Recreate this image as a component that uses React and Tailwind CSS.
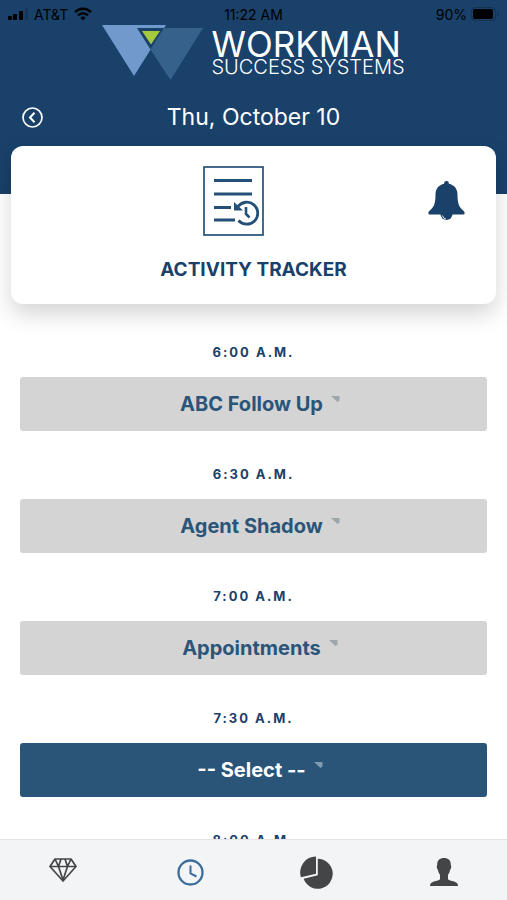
import { useState } from "react";

const ACTIVITIES = [
  "-- Select --",
  "ABC Follow Up",
  "Agent Shadow",
  "Appointments",
];

const SLOTS = [
  { time: "6:00 A.M.", activity: "ABC Follow Up" },
  { time: "6:30 A.M.", activity: "Agent Shadow" },
  { time: "7:00 A.M.", activity: "Appointments" },
  { time: "7:30 A.M.", activity: "-- Select --" },
  { time: "8:00 A.M.", activity: "-- Select --" },
];

function StatusBar() {
  return (
    <div className="relative flex h-6 items-center justify-between px-2 pt-1 text-[14px] text-black">
      <div className="flex items-center gap-1.5">
        <svg width="20" height="12" viewBox="0 0 20 12">
          <rect x="0" y="8" width="4" height="4" rx="1" />
          <rect x="5" y="6" width="4" height="6" rx="1" />
          <rect x="11" y="3" width="4" height="9" rx="1" />
          <rect x="17" y="0" width="3" height="12" rx="1" opacity="0.15" />
        </svg>
        <span>AT&T</span>
        <svg width="18" height="14" viewBox="0 0 18 14" fill="none" stroke="black" strokeWidth="2.4">
          <path d="M1 5.2C5.4.6 12.6.6 17 5.2" />
          <path d="M4 8.4c2.8-2.9 7.2-2.9 10 0" />
          <path d="M6.3 10.7c1.5-1.5 3.9-1.5 5.4 0L9 13.5z" fill="black" stroke="none" />
        </svg>
      </div>
      <span className="absolute inset-x-0 text-center">11:22 AM</span>
      <div className="flex items-center gap-1">
        <span>90%</span>
        <svg width="28" height="14" viewBox="0 0 28 14">
          <rect x="0.5" y="0.5" width="24" height="13" rx="3.5" fill="none" stroke="black" opacity="0.2" />
          <rect x="2" y="2" width="20" height="10" rx="2" />
          <path d="M26 4.500c2 .8 2 4.200 0 5z" opacity="0.2" />
        </svg>
      </div>
    </div>
  );
}

function Logo() {
  return (
    <div className="flex h-14 items-start justify-center gap-2 pt-px">
      <svg width="101" height="55" viewBox="0 0 101 55">
        <path d="M0 0h64L32 51z" fill="#7199cb" />
        <path d="M48.500 24.500 62 3h39L68.500 55z" fill="#36618a" />
        <path d="M35 3h27L48.500 24.500z" fill="#19416a" />
        <path d="M40 6h18L49 19.500z" fill="#a6c83c" />
      </svg>
      <div className="pt-1 whitespace-nowrap text-white">
        <p className="text-[35px] leading-[30px]">WORKMAN</p>
        <p className="text-[20px] leading-4 font-light">SUCCESS SYSTEMS</p>
      </div>
    </div>
  );
}

function Header() {
  return (
    <header className="bg-[#19416a] pb-14">
      <StatusBar />
      <Logo />
      <div className="relative mt-4 flex h-[42px] items-center justify-center text-white">
        <button type="button" aria-label="Previous day" className="absolute left-[22px]">
          <svg width="21" height="21" viewBox="0 0 21 21" fill="none" stroke="white" strokeWidth="1.7">
            <circle cx="10.5" cy="10.5" r="9.5" />
            <path d="M12.5 5.8 8 10.5l4.500 4.700" strokeWidth="2" />
          </svg>
        </button>
        <h1 className="text-[23px]">Thu, October 10</h1>
      </div>
    </header>
  );
}

function TrackerCard() {
  return (
    <section className="relative mx-[11px] -mt-12 flex flex-col items-center rounded-xl bg-white pt-5 pb-5 shadow-[0_10px_22px_rgba(0,0,0,0.17)]">
      <svg className="mr-10" width="61" height="70" viewBox="0 0 61 70" fill="none" stroke="#245078">
        <rect x="1" y="1" width="59" height="68" strokeWidth="1.7" />
        <path d="M11 14.500h38M11 28h38M11 41.500h17M11 54h21" strokeWidth="3.2" />
        <path d="M35 40.500A11 11 0 1 1 35.500 54.500" strokeWidth="2.8" />
        <path d="M31 36v8.500h9z" fill="#245078" stroke="none" />
        <path d="M43 41v7l3.500 3.500" strokeWidth="2.6" />
      </svg>
      <h2 className="mt-5 text-[19px] leading-7 font-bold text-[#19416a]">ACTIVITY TRACKER</h2>
      <button type="button" aria-label="Notifications" className="absolute top-[35px] right-[31px]">
        <svg width="37" height="41" viewBox="0 0 37 41" fill="#19416a">
          <path d="M18.500 0a2.300 2.300 0 0 1 2.300 2.800C26.500 4 29.500 8 29.500 13.500c0 9 1.500 12.500 6.200 16.500 1.600 1.400 1.100 3.500-.7 3.500H2c-1.800 0-2.300-2.100-.7-3.500C6 26 7.500 22.500 7.500 13.500 7.500 8 10.500 4 16.200 2.800A2.300 2.300 0 0 1 18.500 0z" />
          <path d="M12.500 33h12a6 6 0 0 1-12 0z" />
          <path d="M14.500 34.500a4 4 0 0 0 3.500 3.500" fill="none" stroke="white" strokeWidth="0.9" />
        </svg>
      </button>
    </section>
  );
}

function Slot({ slot, index, onChange }) {
  const id = `slot-${index}`;
  const empty = slot.activity === ACTIVITIES[0];

  return (
    <li>
      <label
        htmlFor={id}
        className="block text-center text-[13px] leading-5 font-bold tracking-[2px] text-[#19416a]"
      >
        {slot.time}
      </label>
      <div
        className={`mt-[15px] flex h-[54px] items-center justify-center rounded-[3px] ${
          empty ? "bg-[#2a5579] text-white" : "bg-[#d4d4d4] text-[#2a5579]"
        }`}
      >
        <div className="relative">
          <select
            id={id}
            value={slot.activity}
            onChange={(e) => onChange(index, e.target.value)}
            className="block appearance-none pr-1 text-[20px] leading-7 font-bold field-sizing-content"
          >
            {ACTIVITIES.map((a) => (
              <option key={a}>{a}</option>
            ))}
          </select>
          <svg
            width="9"
            height="7"
            viewBox="0 0 9 7"
            className={`pointer-events-none absolute top-1.5 left-full ml-1 ${
              empty ? "text-[#7f9bb3]" : "text-[#9fa6a9]"
            }`}
          >
            <path d="M0 0h8.500v4.500L6.500 6z" fill="currentColor" />
          </svg>
        </div>
      </div>
    </li>
  );
}

function TabBar() {
  return (
    <nav className="grid h-[61px] shrink-0 grid-cols-4 place-items-center border-t border-[#e2e4e6] bg-[#f3f4f6] pt-1">
      <a href="#goals" aria-label="Goals" className="pb-1">
        <svg width="28" height="24" viewBox="0 0 28 24" fill="none" stroke="#444547" strokeWidth="1.7" strokeLinejoin="round">
          <path d="M6 1h16l5 7.500L14 23 1 8.500z" />
          <path d="M1 8.500h26M9.500 8.500 14 22l4.500-13.500M6 1l3.500 7.500L12 1M22 1l-3.500 7.500L16 1" />
        </svg>
      </a>
      <a href="#tracker" aria-label="Tracker">
        <svg width="27" height="27" viewBox="0 0 27 27" fill="none" stroke="#3b6c9b">
          <circle cx="13.5" cy="13.5" r="12" strokeWidth="2.3" />
          <path d="M13.500 6.500v8l6 3" strokeWidth="2" />
        </svg>
      </a>
      <a href="#reports" aria-label="Reports">
        <svg width="33" height="33" viewBox="0 0 33 33" fill="#444547">
          <path d="M16 .5v17.300L.9 21.300A15.500 16 0 0 1 16 .5z" />
          <path d="M17.800 2.800a15 15 0 1 1-14.200 20l14.200-3.600z" />
        </svg>
      </a>
      <a href="#profile" aria-label="Profile">
        <svg width="28" height="28" viewBox="0 0 28 28" fill="#444547">
          <path d="M14 0c4.300 0 6.800 2.300 6.800 6.500 0 1 .7 1.500.3 3.200-.2 1.300-.9 1.700-1.200 2.700-.4 2-1.200 3.300-1.900 4.300v4.100c0 1.200 1.200 1.600 4 2.200 4 .8 6 2 6 5H0c0-3 2-4.200 6-5 2.800-.6 4-1 4-2.200v-4.100c-.7-1-1.500-2.300-1.900-4.300-.3-1-1-1.400-1.200-2.700-.4-1.700.3-2.200.3-3.200C7.200 2.300 9.700 0 14 0z" />
        </svg>
      </a>
    </nav>
  );
}

export default function App() {
  const [slots, setSlots] = useState(SLOTS);

  const handleChange = (index, activity) => {
    setSlots((prev) => prev.map((s, i) => (i === index ? { ...s, activity } : s)));
  };

  return (
    <div className="flex h-screen flex-col bg-white font-[Inter,sans-serif]">
      <main className="min-h-0 flex-1 overflow-hidden">
        <Header />
        <TrackerCard />
        <ul className="flex flex-col gap-[33px] px-5 pt-[38px]">
          {slots.map((slot, i) => (
            <Slot key={slot.time} slot={slot} index={i} onChange={handleChange} />
          ))}
        </ul>
      </main>
      <TabBar />
    </div>
  );
}
